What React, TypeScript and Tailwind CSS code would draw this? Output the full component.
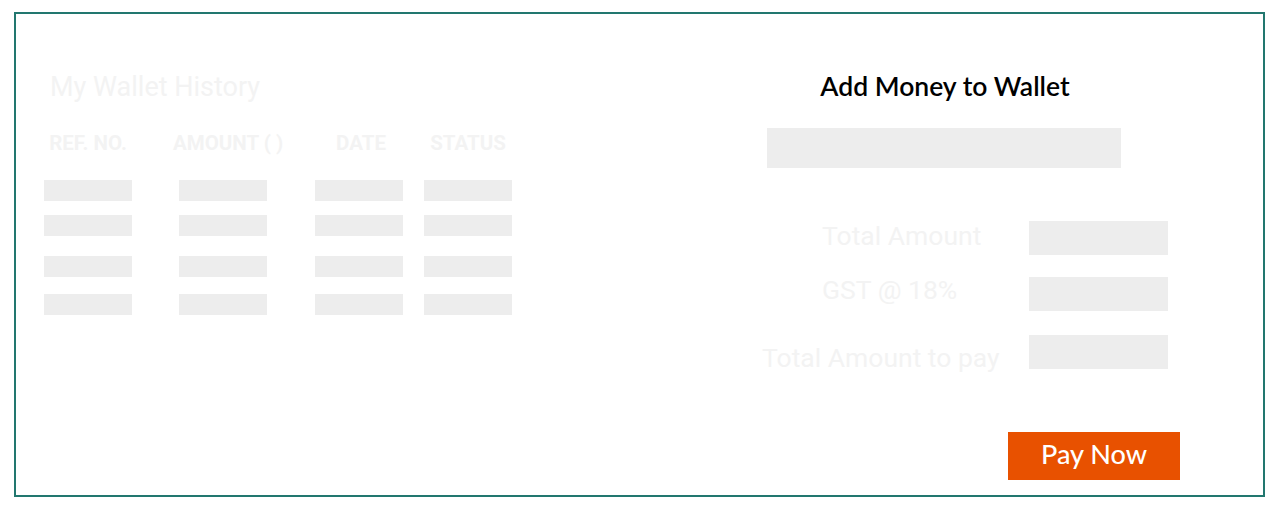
import React from "react";

const rows = [0, 1, 2, 3];
const rowGaps = ["mt-0", "mt-[14px]", "mt-[20px]", "mt-[17px]"];

function Bar() {
  return <div className="h-[21px] w-[88px] bg-[#ededed]" />;
}

export default function App() {
  return (
    <div className="min-h-screen bg-white pt-[12px] pl-[14px]">
      <div className="flex h-[485px] w-[1251px] border-2 border-[#22776f] font-['Roboto',sans-serif]">
        {/* wallet history */}
        <div className="w-[746px] pl-[28px] pt-[57px]">
          <h2 className="pl-[6px] text-[27px] leading-[32px] text-[#f3f3f3]">My Wallet History</h2>
          <div className="mt-[28px] flex text-[20.5px] font-bold leading-[24px] text-[#f3f3f3]">
            <div className="w-[88px] whitespace-nowrap text-center">
              <span className="-ml-[4px] -mr-[4px] inline-block">REF. NO.</span>
            </div>
            <div className="ml-[47px] w-[88px] whitespace-nowrap text-center">
              <span className="-mr-[6px] -ml-[6px] inline-block">AMOUNT ( )</span>
            </div>
            <div className="ml-[48px] w-[88px] whitespace-nowrap text-center">
              <span className="inline-block translate-x-[2px]">DATE</span>
            </div>
            <div className="ml-[21px] w-[88px] whitespace-nowrap text-center">STATUS</div>
          </div>
          <div className="mt-[25px]">
            {rows.map((r) => (
              <div key={r} className={`flex ${rowGaps[r]}`}>
                <Bar />
                <div className="ml-[47px]">
                  <Bar />
                </div>
                <div className="ml-[48px]">
                  <Bar />
                </div>
                <div className="ml-[21px]">
                  <Bar />
                </div>
              </div>
            ))}
          </div>
        </div>

        {/* add money */}
        <div className="pt-[56px]">
          <h2 className="w-[366px] text-center font-['Lato',sans-serif] text-[26.5px] font-semibold leading-[32px] text-black">
            Add Money to Wallet
          </h2>
          <div className="ml-[5px] mt-[26px] h-[40px] w-[354px] bg-[#ededed]" />

          <div className="mt-[53px] flex items-center">
            <div className="w-[267px] pl-[60px] text-[26.5px] leading-[32px] text-[#f3f3f3] -translate-y-[2px]">Total Amount</div>
            <div className="h-[34px] w-[139px] bg-[#ededed]" />
          </div>
          <div className="mt-[22px] flex items-center">
            <div className="w-[267px] pl-[60px] text-[26.5px] leading-[32px] text-[#f3f3f3] -translate-y-[4px]">GST @ 18%</div>
            <div className="h-[34px] w-[139px] bg-[#ededed]" />
          </div>
          <div className="mt-[24px] flex items-center">
            <div className="w-[267px] text-[26.5px] leading-[32px] text-[#f3f3f3] translate-y-[6px]">Total Amount to pay</div>
            <div className="h-[34px] w-[139px] bg-[#ededed]" />
          </div>

          <button className="ml-[246px] mt-[63px] flex h-[48px] w-[172px] items-center justify-center bg-[#e85100] pb-[4px] font-['Lato',sans-serif] text-[27px] font-medium text-white">
            Pay Now
          </button>
        </div>
      </div>
    </div>
  );
}
